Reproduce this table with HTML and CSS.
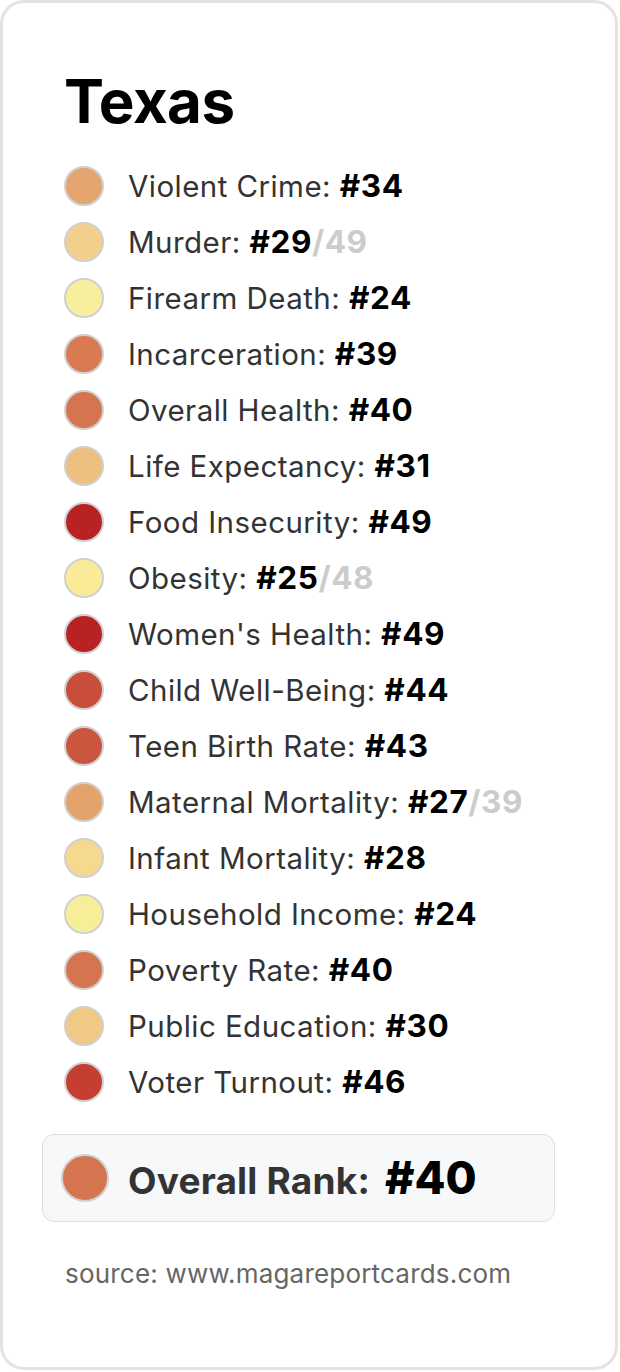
FILE: index.html
```html
<!DOCTYPE html>
<html lang="en">
<head>
<meta charset="utf-8">
<title>Texas Report Card</title>
<link rel="stylesheet" href="styles.css">
</head>
<body>
<div class="card">
  <div class="inner">
    <h1 class="title">Texas</h1>
    <ul class="list">
      <li class="row"><span class="dot" style="background:#e5a56e"></span><span class="text">Violent Crime: <b class="rank">#34</b></span></li>
      <li class="row"><span class="dot" style="background:#f2cf8b"></span><span class="text">Murder: <b class="rank">#29</b><b class="of">/49</b></span></li>
      <li class="row"><span class="dot" style="background:#f7ef9b"></span><span class="text">Firearm Death: <b class="rank">#24</b></span></li>
      <li class="row"><span class="dot" style="background:#d87b53"></span><span class="text">Incarceration: <b class="rank">#39</b></span></li>
      <li class="row"><span class="dot" style="background:#d5754f"></span><span class="text">Overall Health: <b class="rank">#40</b></span></li>
      <li class="row"><span class="dot" style="background:#eec080"></span><span class="text">Life Expectancy: <b class="rank">#31</b></span></li>
      <li class="row"><span class="dot" style="background:#b82222"></span><span class="text">Food Insecurity: <b class="rank">#49</b></span></li>
      <li class="row"><span class="dot" style="background:#fbea98"></span><span class="text">Obesity: <b class="rank">#25</b><b class="of">/48</b></span></li>
      <li class="row"><span class="dot" style="background:#b82222"></span><span class="text">Women's Health: <b class="rank">#49</b></span></li>
      <li class="row"><span class="dot" style="background:#c84d3b"></span><span class="text">Child Well-Being: <b class="rank">#44</b></span></li>
      <li class="row"><span class="dot" style="background:#cb5640"></span><span class="text">Teen Birth Rate: <b class="rank">#43</b></span></li>
      <li class="row"><span class="dot" style="background:#e5a36c"></span><span class="text">Maternal Mortality: <b class="rank">#27</b><b class="of">/39</b></span></li>
      <li class="row"><span class="dot" style="background:#f5d98e"></span><span class="text">Infant Mortality: <b class="rank">#28</b></span></li>
      <li class="row"><span class="dot" style="background:#f6ee98"></span><span class="text">Household Income: <b class="rank">#24</b></span></li>
      <li class="row"><span class="dot" style="background:#d5754f"></span><span class="text">Poverty Rate: <b class="rank">#40</b></span></li>
      <li class="row"><span class="dot" style="background:#f0c985"></span><span class="text">Public Education: <b class="rank">#30</b></span></li>
      <li class="row"><span class="dot" style="background:#c43e31"></span><span class="text">Voter Turnout: <b class="rank">#46</b></span></li>
    </ul>
  </div>
  <div class="overall">
    <span class="dot dot-lg" style="background:#d5754f"></span>
    <span class="overall-text">Overall Rank:<span class="overall-rank">#40</span></span>
  </div>
  <p class="source">source: www.magareportcards.com</p>
</div>
</body>
</html>
```

FILE: styles.css
```css
html, body {
  margin: 0;
  padding: 0;
  background: #ffffff;
}

body {
  font-family: "Inter", "Liberation Sans", sans-serif;
  width: 620px;
  height: 1372px;
}

.card {
  box-sizing: border-box;
  width: 618px;
  height: 1370px;
  border: 3px solid #e3e3e3;
  border-radius: 24px;
  background: #ffffff;
  padding: 62px 0 0 39px;
}

.inner {
  padding-left: 22px;
}

.title {
  margin: 0;
  font-size: 60px;
  line-height: 72px;
  font-weight: 700;
  color: #000;
  letter-spacing: -0.5px;
}

.list {
  list-style: none;
  margin: 21px 0 0 0;
  padding: 0;
}

.row {
  display: flex;
  align-items: center;
  height: 56px;
}

.text {
  white-space: nowrap;
  font-size: 29.5px;
  line-height: 40px;
  letter-spacing: 0.45px;
  color: #333;
}

.dot {
  box-sizing: border-box;
  flex: 0 0 auto;
  width: 40px;
  height: 40px;
  border-radius: 50%;
  border: 2px solid #d0d0d0;
  margin-right: 24px;
}

.rank {
  font-size: 31.5px;
  font-weight: 700;
  letter-spacing: 0.6px;
  color: #000;
}

.of {
  font-size: 31.5px;
  font-weight: 700;
  letter-spacing: 0.5px;
  color: #cccccc;
}

.overall {
  box-sizing: border-box;
  display: flex;
  align-items: center;
  width: 513px;
  height: 88px;
  margin-top: 24px;
  padding-left: 18px;
  background: #f7f8fa;
  border: 1px solid #dedede;
  border-radius: 12px;
}

.dot-lg {
  width: 48px;
  height: 48px;
  margin-right: 19px;
}

.overall-text {
  font-size: 37px;
  line-height: 48px;
  font-weight: 700;
  letter-spacing: 0.2px;
  color: #333;
  white-space: nowrap;
  position: relative;
  top: 1px;
}

.overall-rank {
  font-size: 45px;
  font-weight: 800;
  letter-spacing: 0;
  color: #000;
  margin-left: 15px;
}

.source {
  margin: 37px 0 0 23px;
  font-size: 26px;
  letter-spacing: 0.2px;
  line-height: 29px;
  color: #666;
}
```
